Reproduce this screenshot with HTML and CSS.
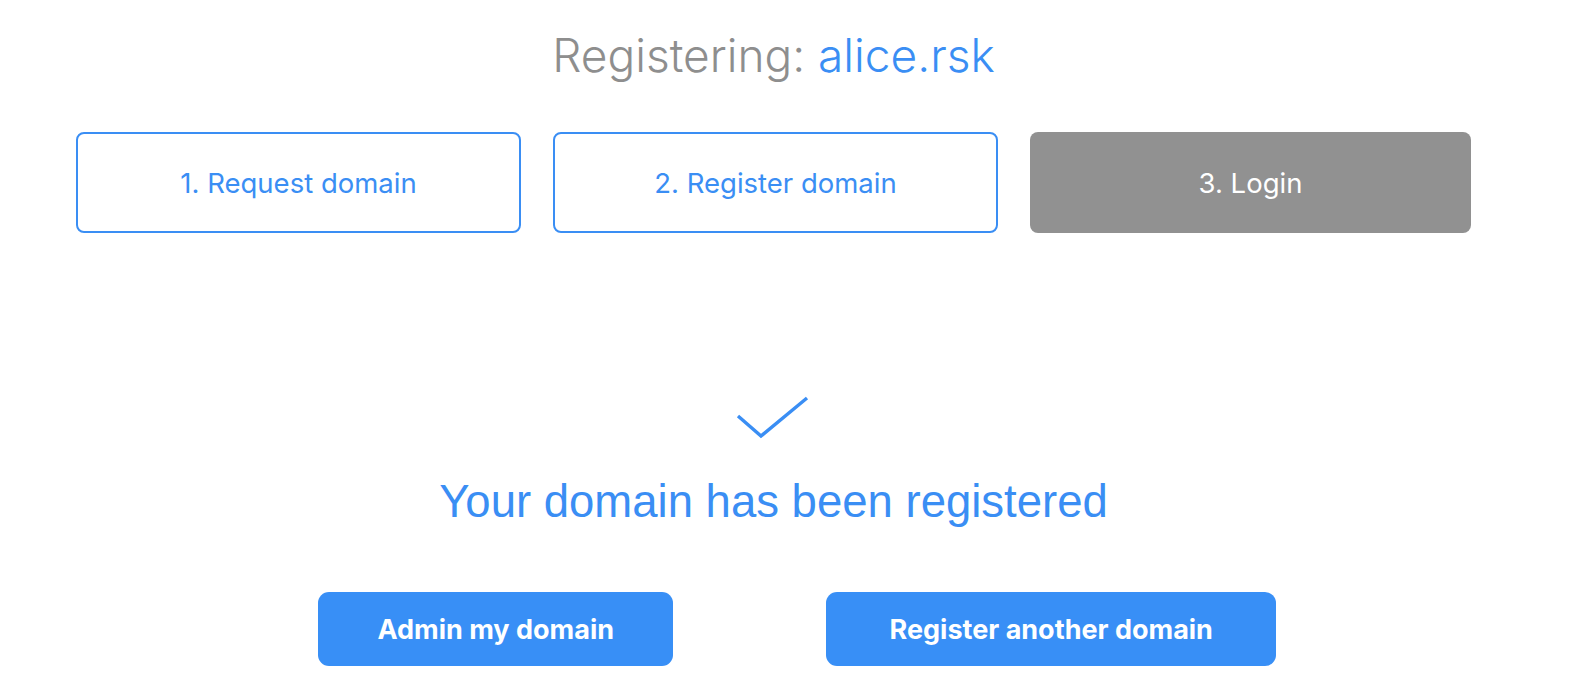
FILE: index.html
```html
<!DOCTYPE html>
<html lang="en">
<head>
<meta charset="utf-8">
<title>Registering: alice.rsk</title>
<link rel="stylesheet" href="styles.css">
</head>
<body>
<div class="page">
  <h1 class="title">Registering: <span class="domain">alice.rsk</span></h1>
  <div class="steps">
    <div class="step step-done">1. Request domain</div>
    <div class="step step-done">2. Register domain</div>
    <div class="step step-current">3. Login</div>
  </div>
  <div class="result">
    <svg class="check" width="74" height="44" viewBox="0 0 74 44" aria-hidden="true">
      <polyline points="2,20 25,40 71,2" fill="none" stroke="#3a8ef4" stroke-width="3.4"/>
    </svg>
    <h2 class="result-text">Your domain has been registered</h2>
  </div>
  <div class="actions">
    <button class="btn btn-admin">Admin my domain</button>
    <button class="btn btn-another">Register another domain</button>
  </div>
</div>
</body>
</html>
```
FILE: styles.css
```css
html, body {
  margin: 0;
  padding: 0;
  background: #ffffff;
}
.page {
  width: 1547px;
  font-family: Inter, "Noto Sans", sans-serif;
}
.title {
  margin: 0;
  padding-top: 27px;
  text-align: center;
  font-weight: 300;
  font-size: 46px;
  line-height: 56px;
  color: #8e8e8e;
}
.domain {
  color: #3a8ef4;
}
.steps {
  display: flex;
  gap: 32px;
  width: 1395px;
  margin: 49px auto 0;
}
.step {
  flex: 1;
  height: 101px;
  box-sizing: border-box;
  border-radius: 8px;
  display: flex;
  align-items: center;
  justify-content: center;
  font-size: 27.5px;
  font-weight: 400;
}
.step-done {
  border: 2px solid #3a8ef4;
  color: #3a8ef4;
}
.step-current {
  background: #919191;
  color: #ffffff;
}
.result {
  display: flex;
  flex-direction: column;
  align-items: center;
  margin-top: 163px;
}
.check {
  display: block;
  margin-left: -2px;
}
.result-text {
  margin: 36px 0 0;
  font-family: "Liberation Sans", Arial, sans-serif;
  font-weight: 400;
  font-size: 45.5px;
  line-height: 52px;
  color: #3a8ef4;
}
.actions {
  display: grid;
  grid-template-columns: 1fr 1fr;
  justify-items: center;
  width: 1111px;
  margin: 64px auto 0;
}
.btn {
  height: 74px;
  border: none;
  border-radius: 11px;
  background: #388ff6;
  color: #ffffff;
  font-family: Inter, "Noto Sans", sans-serif;
  font-weight: 700;
  font-size: 27px;
  padding: 0;
  cursor: pointer;
}
.btn-admin {
  width: 355px;
}
.btn-another {
  width: 450px;
}
```
